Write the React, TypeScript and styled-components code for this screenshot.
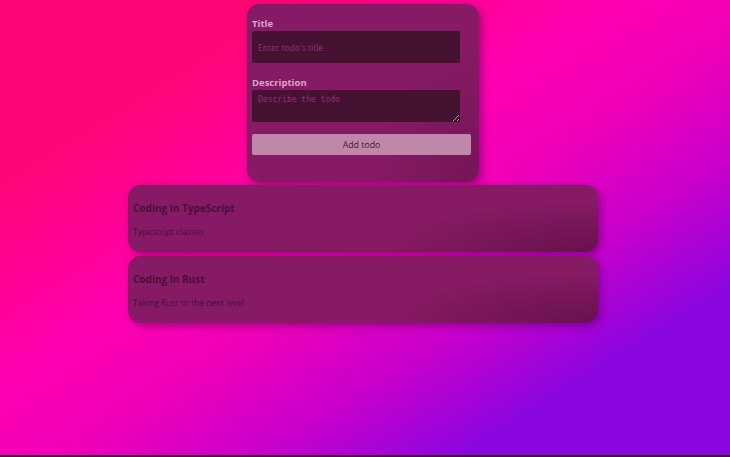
import React from "react";
import styled, { createGlobalStyle } from "styled-components";

const Global = createGlobalStyle`
  html, body { margin: 0; padding: 0; }
  body {
    font-family: "Open Sans", "Liberation Sans", sans-serif;
    background: #4a1034;
  }
`;

const Page = styled.div`
  box-sizing: border-box;
  height: 455px;
  background: linear-gradient(
    to bottom right,
    #ff0677 0%,
    #ff0677 20%,
    #ff00b0 42%,
    #f000b8 54%,
    #c800cc 68%,
    #8a06e0 82%,
    #8a06e0 100%
  );
  display: flex;
  flex-direction: column;
  align-items: center;
  padding: 4px 4px 0 0;
  overflow: hidden;
`;

const Card = styled.div<{ $w: number; $shade: number }>`
  box-sizing: border-box;
  width: ${(p) => p.$w}px;
  background:
    radial-gradient(
      ellipse 60% 100% at 100% 100%,
      rgba(40, 0, 30, ${(p) => p.$shade}),
      rgba(40, 0, 30, 0) 75%
    ),
    #861a64;
  border-radius: 13px;
  box-shadow: 3px 3px 8px rgba(70, 0, 70, 0.45);
`;

const Form = styled(Card)`
  display: flex;
  flex-direction: column;
  padding: 13px 8px 27px 5px;
`;

const Label = styled.label`
  font-size: 9.5px;
  font-weight: 700;
  color: #d9a6c9;
  line-height: 14px;
`;

const Field = styled.input`
  box-sizing: border-box;
  width: 208px;
  height: 32px;
  border: none;
  border-radius: 2px;
  background: #451331;
  color: #d9a6c9;
  padding: 0 6px;
  font-family: "Open Sans", "Liberation Sans", sans-serif;
  font-size: 8.5px;
  outline: none;
  margin-bottom: 13px;
  &::placeholder { color: #9c2a7c; }
`;

const Area = styled.textarea`
  box-sizing: border-box;
  width: 208px;
  height: 32px;
  border: none;
  border-radius: 2px;
  background: #451331;
  color: #d9a6c9;
  padding: 5px 6px;
  font-family: "DejaVu Sans Mono", "Liberation Mono", monospace;
  font-size: 8px;
  outline: none;
  resize: vertical;
  margin-bottom: 12px;
  display: block;
  &::placeholder { color: #9c2a7c; }
`;

const Button = styled.button`
  width: 219px;
  height: 21px;
  border: none;
  border-radius: 2px;
  background: #c088a8;
  color: #4b0f3a;
  font-family: "Open Sans", "Liberation Sans", sans-serif;
  font-size: 8.8px;
  padding: 0;
`;

const List = styled.div`
  display: flex;
  flex-direction: column;
  gap: 4px;
  margin-top: 3px;
`;

const Todo = styled(Card)`
  height: 67px;
  padding: 16px 5px 0;
`;

const TodoTitle = styled.h3`
  margin: 0;
  font-size: 10px;
  font-weight: 700;
  line-height: 14px;
  color: #4b0f3a;
`;

const TodoDesc = styled.p`
  margin: 11px 0 0;
  font-size: 8.5px;
  line-height: 12px;
  color: #4b0f3a;
`;

const todos = [
  { title: "Coding in TypeScript", description: "Typescript classes" },
  { title: "Coding in Rust", description: "Taking Rust to the next level" },
];

export default function App() {
  return (
    <>
      <Global />
      <Page>
        <Form
          $w={232}
          $shade={0.18}
          as="form"
          onSubmit={(e: React.FormEvent) => e.preventDefault()}
        >
          <Label>Title</Label>
          <Field placeholder="Enter todo's title" />
          <Label>Description</Label>
          <Area placeholder="Describe the todo" />
          <Button type="submit">Add todo</Button>
        </Form>
        <List>
          {todos.map((t) => (
            <Todo $w={470} $shade={0.32} key={t.title}>
              <TodoTitle>{t.title}</TodoTitle>
              <TodoDesc>{t.description}</TodoDesc>
            </Todo>
          ))}
        </List>
      </Page>
    </>
  );
}
